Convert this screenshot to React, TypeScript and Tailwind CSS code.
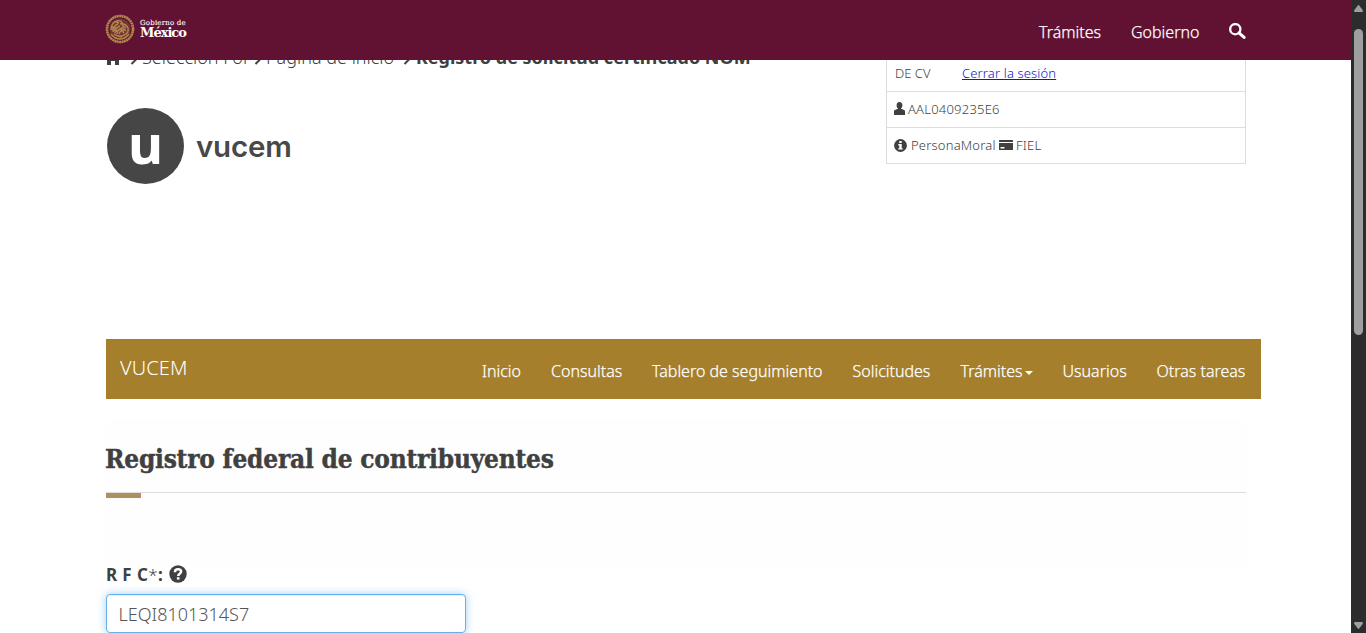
import React from "react";

const NAV: { label: string; width: string; caret?: boolean }[] = [
  { label: "Inicio", width: "w-[39px]" },
  { label: "Consultas", width: "w-[71px]" },
  { label: "Tablero de seguimiento", width: "w-[170.500px]" },
  { label: "Solicitudes", width: "w-[78px]" },
  { label: "Trámites", width: "w-[72px]", caret: true },
  { label: "Usuarios", width: "w-[64px]" },
  { label: "Otras tareas", width: "w-[89px]" },
];

function Seal() {
  return (
    <svg className="h-[30px] w-[30px] shrink-0" viewBox="0 0 30 30" fill="none" stroke="#b28a4c">
      <circle cx="15" cy="15" r="10.500" fill="#a07540" fillOpacity=".35" stroke="none" />
      <circle cx="15" cy="15" r="13" strokeWidth="2.600" strokeDasharray="2 .4" />
      <path
        d="M6 16c0-5 2-8 6-9 2-1 5 0 5 2l-2 1c3-1 7 1 8 4 1 4-1 6-4 7M8 18c0-4 2-7 5-8M10 19c0-3 2-6 5-7M12 20c0-3 2-5 5-6M14 20c1-3 3-4 5-4M17 11l4 3M17 13l4 4M16 15l3 4M6 20c3 4 7 5 9 5s6-1 9-5M9 20c4 3 8 3 12 0M11 8l3 1M7 13l4 1M7 15l5 2M13 22l4 1"
        strokeWidth="1.400"
      />
    </svg>
  );
}

function SearchIcon() {
  return (
    <svg className="h-4 w-[17px]" viewBox="0 0 17 16" fill="none" stroke="#fff">
      <circle cx="6.300" cy="6.200" r="5.100" strokeWidth="2.300" />
      <path d="M10 9.800l5.100 4.600" strokeWidth="3" strokeLinecap="round" />
    </svg>
  );
}

function HomeIcon() {
  return (
    <svg className="h-[16px] w-[16px]" viewBox="0 0 16 16" fill="#404041">
      <path d="M8 0L0 8h2v8h4v-4h4v4h4V8h2l-3-3V1h-2v2z" />
    </svg>
  );
}

function Chevron() {
  return (
    <svg className="h-[12px] w-[8px]" viewBox="0 0 8 12" fill="none" stroke="#404041" strokeWidth="2">
      <path d="M1.500 1l5 5-5 5" />
    </svg>
  );
}

function UserIcon() {
  return (
    <svg className="h-[13px] w-[11px]" viewBox="0 0 11 13" fill="#404041">
      <path d="M5.500 0c2 0 2.900 1.400 2.900 3.200 0 1.400-.6 2.600-1.400 3.300v.3l3.200 1.200c.6.3.8.8.8 1.500V13H0V9.500c0-.7.2-1.200.8-1.500L4 6.800v-.3C3.200 5.800 2.600 4.600 2.600 3.200 2.600 1.400 3.500 0 5.500 0z" />
    </svg>
  );
}

function InfoIcon() {
  return (
    <svg className="h-[13px] w-[13px]" viewBox="0 0 13 13">
      <circle cx="6.500" cy="6.500" r="6.400" fill="#404041" />
      <path d="M5.300 2h2.400v2H5.300zM4.300 5h3.400v4.200h1v1.400H4.300V9.200h1V6.400h-1z" fill="#fff" />
    </svg>
  );
}

function CardIcon() {
  return (
    <svg className="h-[10px] w-[14px]" viewBox="0 0 14 10">
      <path d="M0 .5Q0 0 .5 0h13q.5 0 .5.500V2H0zM0 3h14v6.500q0 .5-.5.500H.5Q0 10 0 9.500z" fill="#404041" />
      <path d="M1.500 7h4v1.500h-4z" fill="#fff" />
    </svg>
  );
}

function HelpIcon() {
  return (
    <svg className="-mt-px h-[18px] w-[18px]" viewBox="0 0 18 18">
      <circle cx="9" cy="9" r="8.700" fill="#404041" />
      <path d="M6 7.200V6.700C6 4.900 7.300 4.200 9.100 4.200c1.900 0 3 .9 3 2.400 0 2.200-2.900 2-2.900 4.300" stroke="#fff" strokeWidth="2.500" fill="none" />
      <path d="M7.900 12.200h2.600v2.400H7.900z" fill="#fff" />
    </svg>
  );
}

function Header() {
  return (
    <header className="relative z-10 flex h-[60px] shrink-0 items-start justify-between bg-[#611232] pl-[105px] pr-[105px] text-white">
      <div className="flex gap-[5px] pt-[14px]">
        <Seal />
        <div className="whitespace-nowrap pt-[6px] font-['DejaVu_Serif']">
          <div className="h-[7px] text-[7px] leading-[7px] tracking-[0.2px] [-webkit-text-stroke:0.100px_white]">Gobierno de</div>
          <div className="h-[13px] text-[13px] font-bold leading-[12px] tracking-[-1px]">México</div>
        </div>
      </div>
      <div className="flex whitespace-nowrap pt-5 text-[16px] font-light leading-6 [-webkit-text-stroke:0.250px_white]">
        <span className="w-[92px]">Trámites</span>
        <span className="w-[98px]">Gobierno</span>
        <span className="pt-[3px]"><SearchIcon /></span>
      </div>
    </header>
  );
}

function Scrollbar() {
  return (
    <div className="flex w-[15px] shrink-0 flex-col items-center bg-[#2c2c2c]">
      <svg className="mt-[5px] h-[7px] w-[9px]" viewBox="0 0 9 7" fill="#9f9f9f"><path d="M3.800.5q.7-.8 1.400 0L9 5.500Q9 7 8 7H1Q0 7 0 5.500z" /></svg>
      <div className="mt-[17px] h-[306px] w-[9px] rounded-full bg-[#9f9f9f]" />
      <svg className="mt-auto mb-[4px] h-[7px] w-[9px]" viewBox="0 0 9 7" fill="#9f9f9f"><path d="M3.800 6.500q.7.800 1.400 0L9 1.500Q9 0 8 0H1Q0 0 0 1.500z" /></svg>
    </div>
  );
}

export default function App() {
  return (
    <div className="flex h-[633px] w-full overflow-hidden bg-white font-['Noto_Sans','Open_Sans',sans-serif] text-[#404041]">
      <div className="flex min-w-0 flex-1 flex-col overflow-hidden">
        <Header />
        <main className="w-full pl-[106px]">
          <div className="-mt-[20px] flex h-[184px] w-[1140px] justify-between">
            <div>
              <nav className="flex h-[34px] items-center whitespace-nowrap text-[18px] font-light leading-[34px]">
                <span className="-ml-px flex w-[25px]"><HomeIcon /></span>
                <span className="flex w-[12px] pt-[3px]"><Chevron /></span>
                <span className="w-[112px]">Selección For</span>
                <span className="flex w-[12px] pt-[3px]"><Chevron /></span>
                <span className="w-[137px]">Página de inicio</span>
                <span className="flex w-[13px] pt-[3px]"><Chevron /></span>
                <span className="font-bold">Registro de solicitud certificado NOM</span>
              </nav>
              <div className="ml-px mt-[34px] flex items-center gap-[12px]">
                <div className="flex h-[76px] w-[77px] justify-center rounded-[50%] bg-[#464646] text-[54px] font-bold leading-[70px] text-white">u</div>
                <div className="font-['Inter'] text-[29.500px] font-semibold leading-10 tracking-[-0.200px] text-[#484848]">vucem</div>
              </div>
            </div>
            <div className="h-[124px] w-[360px] border border-[#dddddd] text-[13px] font-light">
              <div className="flex h-[51px] items-end border-b border-[#dddddd] px-2 pb-[8px] leading-5">
                <span className="w-[67px]">DE CV</span>
                <a className="tracking-[0.140px] text-[#0b18c4] underline" href="#">Cerrar la sesión</a>
              </div>
              <div className="flex h-9 items-center gap-[3px] border-b border-[#dddddd] px-[7px] pb-[2px] leading-5">
                <UserIcon /><span className="tracking-[0.220px]">AAL0409235E6</span>
              </div>
              <div className="flex h-9 items-center gap-[3px] px-[7px] pb-[2px] leading-5">
                <InfoIcon /><span className="ml-px w-[85px] tracking-[0.200px]">PersonaMoral</span><CardIcon /><span className="tracking-[0.200px]">FIEL</span>
              </div>
            </div>
          </div>

          <nav className="mt-[115px] flex h-[60px] w-[1155px] justify-between bg-[#a57f2c] pl-[14px] pr-[15.500px] text-white">
            <a className="pt-[14px] text-[20px] font-light leading-[30px] tracking-[0.100px]">VUCEM</a>
            <div className="flex items-start gap-[30px] whitespace-nowrap pt-5 text-[16px] font-light leading-6 [-webkit-text-stroke:0.250px_white]">
              {NAV.map((n) => (
                <span key={n.label} className={`${n.width} flex items-center`}>
                  {n.label}
                  {n.caret && <span className="ml-[2px] mt-[3px] border-x-4 border-t-4 border-x-transparent border-t-white" />}
                </span>
              ))}
            </div>
          </nav>

          <section className="mt-5 h-[147px] w-[1140px] bg-[#fefefe]">
            <h1 className="-ml-px h-[73px] whitespace-nowrap pt-[20px] font-['DejaVu_Serif_Condensed','DejaVu_Serif'] text-[26px] font-bold leading-10 tracking-[-0.220px] [-webkit-text-stroke:0.400px_#404041]">
              Registro federal de contribuyentes
            </h1>
            <div className="h-px bg-[#dddddd]" />
            <div className="h-[5px] w-[35px] bg-[#b38e5d]" />
          </section>

          <div className="flex h-[28px] items-start gap-1 text-[17px] font-bold leading-[17px]">
            <label className="w-[59px] whitespace-nowrap tracking-[0.400px]">R F C<span className="font-light">*</span>:</label>
            <HelpIcon />
          </div>
          <div className="flex h-[39px] w-[360px] items-center rounded-[4px] border border-[#66afe9] bg-white pl-[11.500px] pt-px text-[18px] font-light text-[#555555] shadow-[inset_0_1px_1px_rgba(0,0,0,0.07),0_0_8px_rgba(102,175,233,0.6)]">
            LEQI8101314S7
          </div>
        </main>
      </div>
      <Scrollbar />
    </div>
  );
}
